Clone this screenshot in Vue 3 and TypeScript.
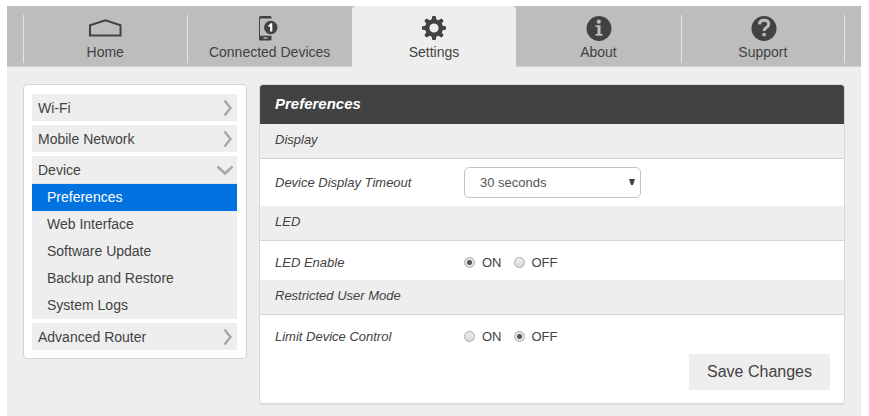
<script setup lang="ts">
import { ref } from 'vue'

type TabId = 'home' | 'devices' | 'settings' | 'about' | 'support'

interface Tab {
  id: TabId
  label: string
}

interface MenuGroup {
  label: string
  open?: boolean
  children?: string[]
}

const tabs: Tab[] = [
  { id: 'home', label: 'Home' },
  { id: 'devices', label: 'Connected Devices' },
  { id: 'settings', label: 'Settings' },
  { id: 'about', label: 'About' },
  { id: 'support', label: 'Support' },
]

const groups: MenuGroup[] = [
  { label: 'Wi-Fi' },
  { label: 'Mobile Network' },
  {
    label: 'Device',
    open: true,
    children: ['Preferences', 'Web Interface', 'Software Update', 'Backup and Restore', 'System Logs'],
  },
  { label: 'Advanced Router' },
]

const activeTab = ref<TabId>('settings')
const activePage = ref('Preferences')
const timeout = ref('30')
const led = ref('on')
const limit = ref('off')
const toothAngles = [0, 45, 90, 135, 180, 225, 270, 315]
</script>

<template>
  <div class="page">
    <nav class="tabs">
      <a
        v-for="tab in tabs"
        :key="tab.id"
        href="#"
        class="tab"
        :class="{ active: tab.id === activeTab }"
        @click.prevent="activeTab = tab.id"
      >
        <svg v-if="tab.id === 'home'" class="icon" viewBox="0 0 34 26" aria-hidden="true">
          <path d="M2 20.500V10.300L17.500 5.200l15 5.100v10.200z" fill="none" stroke="#424242" stroke-width="2" />
        </svg>
        <svg v-else-if="tab.id === 'devices'" class="icon" viewBox="0 0 34 26" aria-hidden="true">
          <path d="M6 2.500a1.500 1.500 0 0 1 1.500-1.500h9.500a1.500 1.500 0 0 1 1.500 1.500v22a1 1 0 0 1-1 1h-10.500a1 1 0 0 1-1-1z" fill="#424242" />
          <path d="M7 3.500h12v17.200h-12z" fill="#bdbdbd" />
          <path d="M10.500 22.300h4v1.400h-4z" fill="#bdbdbd" />
          <circle cx="17.800" cy="12.500" r="6.700" fill="#424242" />
          <path d="M15.400 10.500l2.200-2.200h1.700v8.200h-2.200v-5.300l-1.700 1z" fill="#fff" />
        </svg>
        <svg v-else-if="tab.id === 'settings'" class="icon" viewBox="0 0 34 26" aria-hidden="true">
          <g fill="#424242">
            <path
              v-for="angle in toothAngles"
              :key="angle"
              d="M14.400 6l.8-4.400q.1-.6.700-.6h2.200q.6 0 .7.600l.8 4.400z"
              :transform="`rotate(${angle} 17 13)`"
            />
          </g>
          <circle cx="17" cy="13" r="6.800" fill="none" stroke="#424242" stroke-width="4.400" />
        </svg>
        <svg v-else-if="tab.id === 'about'" class="icon" viewBox="0 0 34 26" aria-hidden="true">
          <circle cx="18" cy="13.500" r="12.500" fill="#424242" />
          <circle cx="17.800" cy="6.700" r="2.100" fill="#bdbdbd" />
          <path d="M14.500 10.300h5v8.700h2v1.800h-7v-1.800h2v-6.900h-2z" fill="#bdbdbd" />
        </svg>
        <svg v-else class="icon" viewBox="0 0 34 26" aria-hidden="true">
          <circle cx="18" cy="13.500" r="12.500" fill="#424242" />
          <path d="M13.400 9.300q.3-4 4.700-4 4.600 0 4.600 3.700 0 2-2.300 3.500-2.300 1.500-2.300 3.500" fill="none" stroke="#bdbdbd" stroke-width="3" />
          <path d="M16.500 18h3.200v3.200h-3.200z" fill="#bdbdbd" />
        </svg>
        <span>{{ tab.label }}</span>
      </a>
    </nav>

    <div class="content">
      <aside class="sidebar">
        <div v-for="group in groups" :key="group.label" class="group">
          <a href="#" class="group-link" @click.prevent>
            <span>{{ group.label }}</span>
            <svg v-if="group.open" class="chevron" viewBox="0 0 18 18" aria-hidden="true">
              <path d="M1.500 5.500l7.500 7 7.500-7" />
            </svg>
            <svg v-else class="chevron" viewBox="0 0 18 18" aria-hidden="true">
              <path d="M8.500 1.500l6 7.500-6 7.500" />
            </svg>
          </a>
          <ul v-if="group.children" class="pages">
            <li v-for="page in group.children" :key="page">
              <a
                href="#"
                class="page-link"
                :class="{ current: page === activePage }"
                @click.prevent="activePage = page"
              >{{ page }}</a>
            </li>
          </ul>
        </div>
      </aside>

      <main class="panel">
        <h1>Preferences</h1>
        <form @submit.prevent>
          <h2>Display</h2>
          <div class="row tall">
            <label class="name" for="timeout">Device Display Timeout</label>
            <div class="select">
              <select id="timeout" v-model="timeout">
                <option value="30">30 seconds</option>
              </select>
              <svg viewBox="0 0 6 6" aria-hidden="true"><path d="M0 0h6l-2 6h-2z" /></svg>
            </div>
          </div>
          <h2>LED</h2>
          <div class="row" role="radiogroup" aria-labelledby="led-name">
            <span id="led-name" class="name">LED Enable</span>
            <label class="choice"><input v-model="led" type="radio" name="led" value="on" />ON</label>
            <label class="choice"><input v-model="led" type="radio" name="led" value="off" />OFF</label>
          </div>
          <h2>Restricted User Mode</h2>
          <div class="row" role="radiogroup" aria-labelledby="limit-name">
            <span id="limit-name" class="name">Limit Device Control</span>
            <label class="choice"><input v-model="limit" type="radio" name="limit" value="on" />ON</label>
            <label class="choice"><input v-model="limit" type="radio" name="limit" value="off" />OFF</label>
          </div>
          <div class="actions">
            <button type="submit">Save Changes</button>
          </div>
        </form>
      </main>
    </div>
  </div>
</template>

<style>
body {
  background: #fff;
}
</style>

<style scoped>
* {
  box-sizing: border-box;
}

.page {
  min-height: calc(100vh - 6px);
  margin: 6px 8px 0 7px;
  background: #eee;
  color: #424242;
  font-family: 'Liberation Sans', Arial, sans-serif;
  font-size: 14px;
}

a {
  color: inherit;
  text-decoration: none;
}

.tabs {
  display: flex;
  height: 61px;
  padding: 0 16px;
  background: #bdbdbd;
  border-bottom: 1px solid #d2d2d2;
}

.tab {
  position: relative;
  flex: 1;
  display: flex;
  flex-direction: column;
  align-items: center;
  gap: 2px;
  height: 61px;
  padding-top: 9px;
  line-height: 18px;
}

.tab::before,
.tab:last-child::after {
  content: '';
  position: absolute;
  top: 9px;
  bottom: 4px;
  left: 0;
  width: 1px;
  background: #e4e4e4;
}

.tab:last-child::after {
  right: 0;
  left: auto;
}

.tab.active {
  background: #eee;
  border-radius: 4px 4px 0 0;
}

.tab.active::before,
.tab.active + .tab::before {
  display: none;
}

.icon {
  width: 34px;
  height: 26px;
}

.content {
  display: grid;
  grid-template-columns: 224px 1fr;
  gap: 12px;
  align-items: start;
  padding: 17px 16px 12px;
}

.sidebar {
  display: flex;
  flex-direction: column;
  gap: 4px;
  padding: 9px 9px 8px 8px;
  background: #fff;
  border: 1px solid #d4d4d4;
  border-radius: 4px;
}

.group {
  background: #eee;
}

.group-link {
  display: flex;
  align-items: center;
  justify-content: space-between;
  height: 27px;
  padding: 0 3px 0 6px;
}

.chevron {
  width: 18px;
  height: 18px;
  fill: none;
  stroke: #a8a8a8;
  stroke-width: 2.5px;
}

.pages {
  margin: 0;
  padding: 0;
  border-top: 1px solid #e2e2e2;
  list-style: none;
}

.page-link {
  display: block;
  padding-left: 15px;
  line-height: 27px;
}

.page-link.current {
  background: #0073e1;
  color: #fff;
}

.panel {
  overflow: hidden;
  background: #fff;
  border: 1px solid #d8d8d8;
  border-radius: 4px;
  box-shadow: 0 1px 1px #ddd;
}

h1 {
  margin: 0;
  padding: 0 15px 1px;
  background: #424242;
  color: #fff;
  font-size: 15px;
  font-style: italic;
  line-height: 38px;
}

h2 {
  height: 35px;
  margin: 0;
  padding: 0 15px;
  background: #eee;
  border-bottom: 1px solid #d4d4d4;
  font-size: 13px;
  font-style: italic;
  font-weight: 400;
  line-height: 31px;
}

.row {
  display: flex;
  align-items: center;
  height: 39px;
  padding: 3px 15px 0;
}

.row.tall {
  height: 47px;
  padding-top: 0;
}

.name {
  width: 189px;
  font-size: 13px;
  font-style: italic;
}

.select {
  position: relative;
}

select {
  width: 177px;
  height: 31px;
  padding: 0 15px;
  appearance: none;
  background: #fff;
  border: 1px solid #c4c4c4;
  border-radius: 5px;
  color: #555;
  font-family: inherit;
  font-size: 13px;
}

.select svg {
  position: absolute;
  top: 12px;
  right: 6px;
  width: 6px;
  height: 6px;
  fill: #424242;
  pointer-events: none;
}

.choice {
  display: flex;
  align-items: center;
  gap: 7px;
  margin-right: 12px;
  font-size: 13px;
}

input {
  width: 11px;
  height: 11px;
  margin: 0;
  appearance: none;
  background: linear-gradient(#eee, #d8d8d8);
  border: 1px solid #aaa;
  border-radius: 50%;
}

input:checked {
  background: radial-gradient(circle, #555 0 2px, #e4e4e4 3px);
}

.actions {
  display: flex;
  justify-content: flex-end;
  padding: 0 14px 13px;
}

button {
  height: 36px;
  padding: 0 18px;
  background: #eee;
  border: 0;
  color: #424242;
  font-family: inherit;
  font-size: 16px;
}
</style>
